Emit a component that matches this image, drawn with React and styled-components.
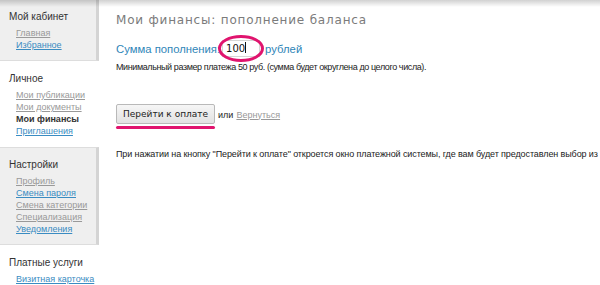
import React from 'react';
import styled, { createGlobalStyle } from 'styled-components';

const GlobalStyle = createGlobalStyle`
*, *::before, *::after {
    box-sizing: border-box;
}
html, body {
    margin: 0;
    padding: 0;
    background: #fff;
    overflow: hidden;
}
body {
    font-family: "Liberation Sans", Arial, sans-serif;
    color: #222;
}
`

const Page = styled.div`
position: relative;
display: flex;
width: 600px;
height: 285px;
overflow: hidden;
&::before {
    content: "";
    position: absolute;
    left: 0;
    top: 0;
    right: 0;
    height: 7px;
    background: linear-gradient(to bottom, rgba(0,0,0,0.18), rgba(0,0,0,0));
    pointer-events: none;
}
`

const Sidebar = styled.div`
flex: 0 0 99px;
width: 99px;
margin-top: -1px;
display: flex;
flex-direction: column;
`

const Section = styled.div`
padding: 10px 0 9px 9px;
background: ${props => props.gray ? '#efefef' : '#fff'};
border-right: 3px solid ${props => props.gray ? '#d4d4d4' : 'transparent'};
border-top: 1px solid ${props => props.gray ? '#dddddd' : 'transparent'};
border-bottom: 1px solid ${props => props.gray ? '#dddddd' : 'transparent'};
`

const SectionTitle = styled.div`
font-size: 10px;
line-height: 14px;
color: #333;
margin-bottom: 3px;
white-space: nowrap;
`

const NavLink = styled.a`
display: block;
padding-left: 7px;
font-size: 9px;
line-height: 12px;
white-space: nowrap;
color: ${props => props.active ? '#333' : props.blue ? '#3a8cc2' : '#999'};
font-weight: ${props => props.active ? 'bold' : 'normal'};
text-decoration: ${props => props.active ? 'none' : 'underline'};
`

const Main = styled.div`
flex: 1;
min-width: 0;
padding: 12px 0 0 17px;
white-space: nowrap;
`

const Heading = styled.h1`
margin: 0;
font-family: "DejaVu Sans", sans-serif;
font-weight: normal;
font-size: 12px;
line-height: 16px;
letter-spacing: 0.8px;
color: #7b7b7b;
`

const AmountRow = styled.div`
display: flex;
align-items: center;
margin-top: 12px;
font-size: 11.3px;
color: #2f86b8;
`

const InputWrap = styled.span`
position: relative;
display: inline-flex;
margin: 0 5px 0 2px;
`

const AmountInput = styled.div`
width: 38px;
height: 17px;
border: 1px solid #d6d6d6;
background: #fff;
font-family: "DejaVu Sans", sans-serif;
font-size: 10px;
line-height: 15px;
color: #111;
padding-left: 3px;
`

const Caret = styled.span`
display: inline-block;
width: 1px;
height: 11px;
background: #111;
vertical-align: -1px;
`

const Ring = styled.svg`
position: absolute;
left: -4px;
top: -5px;
overflow: visible;
`

const Note = styled.div`
margin-top: 4px;
font-size: 9px;
line-height: 12px;
letter-spacing: -0.4px;
color: #222;
`

const ActionRow = styled.div`
display: flex;
align-items: center;
gap: 3px;
margin-top: 27px;
font-size: 9px;
`

const ButtonWrap = styled.div`
display: flex;
flex-direction: column;
gap: 2px;
margin-top: 4px;
`

const PayButton = styled.button`
height: 20px;
padding: 0 6px;
border: 1px solid #b9b9b9;
border-radius: 2px;
background: linear-gradient(to bottom, #f6f6f6, #e2e2e2);
font-family: "DejaVu Sans", sans-serif;
font-size: 9px;
color: #222;
`

const Underline = styled.div`
height: 3px;
border-radius: 2px;
background: #e0146e;
`

const BackLink = styled.a`
color: #999;
font-size: 9px;
text-decoration: underline;
`

const Info = styled.div`
margin-top: 19px;
font-size: 9px;
line-height: 12px;
letter-spacing: -0.1px;
color: #222;
`

const menu = [
    { title: 'Мой кабинет', gray: true, links: [['Главная'], ['Избранное', 'blue']] },
    { title: 'Личное', links: [['Мои публикации'], ['Мои документы'], ['Мои финансы', 'active'], ['Приглашения', 'blue']] },
    { title: 'Настройки', gray: true, links: [['Профиль'], ['Смена пароля', 'blue'], ['Смена категории'], ['Специализация'], ['Уведомления', 'blue']] },
    { title: 'Платные услуги', links: [['Визитная карточка', 'blue']] },
]

export default function App() {
    return (
        <Page>
            <GlobalStyle />
            <Sidebar>
                {menu.map(s => (
                    <Section key={s.title} gray={s.gray}>
                        <SectionTitle>{s.title}</SectionTitle>
                        {s.links.map(([label, kind]) => (
                            <NavLink key={label} href="#" blue={kind === 'blue'} active={kind === 'active'}>{label}</NavLink>
                        ))}
                    </Section>
                ))}
            </Sidebar>
            <Main>
                <Heading>Мои финансы: пополнение баланса</Heading>
                <AmountRow>
                    Сумма пополнения:
                    <InputWrap>
                        <AmountInput>100<Caret /></AmountInput>
                        <Ring width="46" height="27">
                            <ellipse cx="23" cy="13.5" rx="21.5" ry="12" fill="none" stroke="#e0146e" strokeWidth="3" />
                        </Ring>
                    </InputWrap>
                    рублей
                </AmountRow>
                <Note>Минимальный размер платежа 50 руб. (сумма будет округлена до целого числа).</Note>
                <ActionRow>
                    <ButtonWrap>
                        <PayButton>Перейти к оплате</PayButton>
                        <Underline />
                    </ButtonWrap>
                    <span>или</span>
                    <BackLink href="#">Вернуться</BackLink>
                </ActionRow>
                <Info>При нажатии на кнопку "Перейти к оплате" откроется окно платежной системы, где вам будет предоставлен выбор из нескольких способов оплаты.</Info>
            </Main>
        </Page>
    );
}
